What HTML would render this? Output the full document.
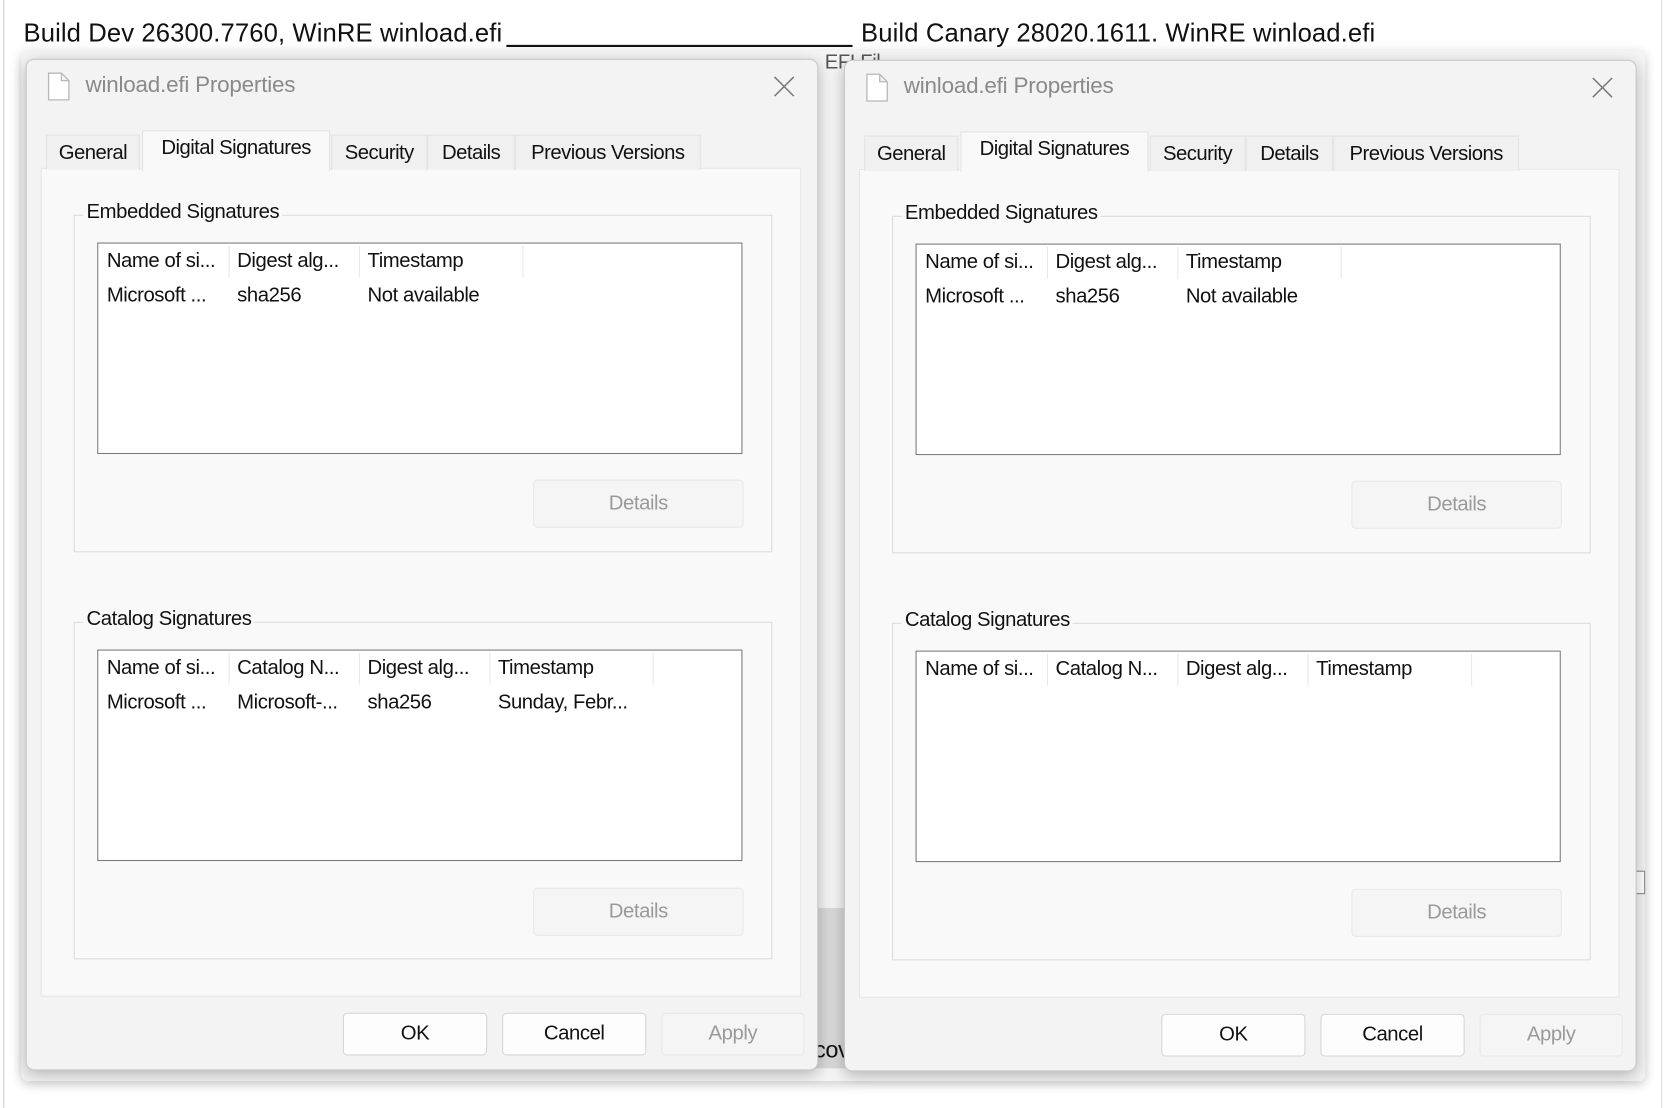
<!DOCTYPE html>
<html><head><meta charset="utf-8"><style>
html,body{margin:0;padding:0;width:1675px;height:1108px;overflow:hidden;background:#fff}
#w{position:absolute;left:0;top:0;width:1568px;height:1037px;transform:scale(1.0683);transform-origin:0 0;font-family:"Liberation Sans",sans-serif;color:#111}
.a{position:absolute}
.t{font-size:19px;letter-spacing:-0.4px;white-space:nowrap}
.dlg{position:absolute;width:740px;height:945px;background:#f3f3f3;border:1px solid #c8c8c8;border-radius:8px;box-shadow:0 4px 14px rgba(0,0,0,.25)}
.tab{position:absolute;top:70px;height:32px;background:#f0f0f0;border:1px solid #e3e3e3;border-bottom:none;font-size:19px;letter-spacing:-0.5px;line-height:34px;text-align:center}
.panel{position:absolute;left:13px;top:101px;width:710px;height:774px;background:#f9f9f9;border:1px solid #e6e6e6}
.grp{position:absolute;left:31px;width:652px;height:314px;border:1px solid #dcdcdc}
.gl{position:absolute;left:8px;top:-14px;background:#f9f9f9;padding:0 3px;font-size:19px;letter-spacing:-0.4px}
.lst{position:absolute;left:21px;top:25px;width:602px;height:196px;background:#fff;border:1px solid #7a7a7a}
.sep{position:absolute;top:2px;width:1px;height:30px;background:#e8e8e8}
.btn{position:absolute;background:#fdfdfd;border:1px solid #d6d6d6;border-radius:4px;text-align:center;font-size:19px;letter-spacing:-0.4px}
.dis{background:#f5f5f5;border-color:#e8e8e8;color:#9a9a9a}
.h{position:absolute;top:18px;font-size:24px;white-space:nowrap;letter-spacing:0.1px}
</style></head><body><div id="w">
<div class="a" style="left:3px;top:0;width:1px;height:1037px;background:#ccc"></div>
<div class="a" style="left:1555px;top:0;width:1px;height:1037px;background:#ddd"></div>
<div class="a" style="left:20px;top:47px;width:1520px;height:965px;background:#f4f4f4;box-shadow:0 3px 10px rgba(0,0,0,.2);border-radius:6px"></div>
<div class="a" style="left:763px;top:850px;width:30px;height:150px;background:#d8d8d8"></div>
<div class="a t" style="left:762px;top:970px;font-size:22px">cov</div>
<div class="a t" style="left:772px;top:48px;font-size:19px;color:#555">EFI Fil</div>
<div class="a" style="left:1530px;top:815px;width:8px;height:20px;border:1px solid #888;background:#fff"></div>
<div class="h" style="left:22px">Build Dev 26300.7760, WinRE winload.efi</div>
<div class="a" style="left:474px;top:42px;width:324px;height:1.5px;background:#111"></div>
<div class="h" style="left:806px">Build Canary 28020.1611. WinRE winload.efi</div>

<!-- left dialog -->
<div class="dlg" style="left:24px;top:55px">
 <svg class="a" style="left:18px;top:11px" width="24" height="28" viewBox="0 0 24 28"><path d="M2.5 1.5h12l7 7v18h-19z M14.5 1.5v7h7" fill="#fff" stroke="#b8b8b8" stroke-width="1.2"/></svg>
 <div class="a" style="left:55px;top:12px;font-size:21px;color:#8a8a8a;letter-spacing:-0.2px">winload.efi Properties</div>
 <svg class="a" style="left:699px;top:15px" width="20" height="20"><path d="M1 1L19 19M19 1L1 19" stroke="#777" stroke-width="1.4"/></svg>
 <div class="panel"></div>
 <div class="tab" style="left:18px;width:86px">General</div>
 <div class="tab" style="left:108px;width:174px;top:66px;height:37px;background:#f9f9f9;line-height:32px">Digital Signatures</div>
 <div class="tab" style="left:285px;width:88px">Security</div>
 <div class="tab" style="left:375px;width:80px">Details</div>
 <div class="tab" style="left:457px;width:172px">Previous Versions</div>
 <div class="grp" style="left:44px;top:145px">
  <div class="gl">Embedded Signatures</div>
  <div class="lst">
   <div class="sep" style="left:122px"></div><div class="sep" style="left:244px"></div><div class="sep" style="left:397px"></div>
   <div class="a t" style="left:8px;top:6px">Name of si...</div><div class="a t" style="left:130px;top:6px">Digest alg...</div><div class="a t" style="left:252px;top:6px">Timestamp</div>
   <div class="a t" style="left:8px;top:38px">Microsoft ...</div><div class="a t" style="left:130px;top:38px">sha256</div><div class="a t" style="left:252px;top:38px">Not available</div>
  </div>
  <div class="btn dis" style="left:429px;top:247px;width:195px;height:43px;line-height:43px">Details</div>
 </div>
 <div class="grp" style="left:44px;top:526px">
  <div class="gl">Catalog Signatures</div>
  <div class="lst">
   <div class="sep" style="left:122px"></div><div class="sep" style="left:244px"></div><div class="sep" style="left:366px"></div><div class="sep" style="left:519px"></div>
   <div class="a t" style="left:8px;top:6px">Name of si...</div><div class="a t" style="left:130px;top:6px">Catalog N...</div><div class="a t" style="left:252px;top:6px">Digest alg...</div><div class="a t" style="left:374px;top:6px">Timestamp</div>
   <div class="a t" style="left:8px;top:38px">Microsoft ...</div><div class="a t" style="left:130px;top:38px">Microsoft-...</div><div class="a t" style="left:252px;top:38px">sha256</div><div class="a t" style="left:374px;top:38px">Sunday, Febr...</div>
  </div>
  <div class="btn dis" style="left:429px;top:248px;width:195px;height:43px;line-height:43px">Details</div>
 </div>
 <div class="btn" style="left:296px;top:892px;width:133px;height:38px;line-height:38px">OK</div>
 <div class="btn" style="left:445px;top:892px;width:133px;height:38px;line-height:38px">Cancel</div>
 <div class="btn dis" style="left:594px;top:892px;width:132px;height:38px;line-height:38px">Apply</div>
</div>

<!-- right dialog -->
<div class="dlg" style="left:790px;top:56px">
 <svg class="a" style="left:18px;top:11px" width="24" height="28" viewBox="0 0 24 28"><path d="M2.5 1.5h12l7 7v18h-19z M14.5 1.5v7h7" fill="#fff" stroke="#b8b8b8" stroke-width="1.2"/></svg>
 <div class="a" style="left:55px;top:12px;font-size:21px;color:#8a8a8a;letter-spacing:-0.2px">winload.efi Properties</div>
 <svg class="a" style="left:699px;top:15px" width="20" height="20"><path d="M1 1L19 19M19 1L1 19" stroke="#777" stroke-width="1.4"/></svg>
 <div class="panel"></div>
 <div class="tab" style="left:18px;width:86px">General</div>
 <div class="tab" style="left:108px;width:174px;top:66px;height:37px;background:#f9f9f9;line-height:32px">Digital Signatures</div>
 <div class="tab" style="left:285px;width:88px">Security</div>
 <div class="tab" style="left:375px;width:80px">Details</div>
 <div class="tab" style="left:457px;width:172px">Previous Versions</div>
 <div class="grp" style="left:44px;top:145px">
  <div class="gl">Embedded Signatures</div>
  <div class="lst">
   <div class="sep" style="left:122px"></div><div class="sep" style="left:244px"></div><div class="sep" style="left:397px"></div>
   <div class="a t" style="left:8px;top:6px">Name of si...</div><div class="a t" style="left:130px;top:6px">Digest alg...</div><div class="a t" style="left:252px;top:6px">Timestamp</div>
   <div class="a t" style="left:8px;top:38px">Microsoft ...</div><div class="a t" style="left:130px;top:38px">sha256</div><div class="a t" style="left:252px;top:38px">Not available</div>
  </div>
  <div class="btn dis" style="left:429px;top:247px;width:195px;height:43px;line-height:43px">Details</div>
 </div>
 <div class="grp" style="left:44px;top:526px">
  <div class="gl">Catalog Signatures</div>
  <div class="lst">
   <div class="sep" style="left:122px"></div><div class="sep" style="left:244px"></div><div class="sep" style="left:366px"></div><div class="sep" style="left:519px"></div>
   <div class="a t" style="left:8px;top:6px">Name of si...</div><div class="a t" style="left:130px;top:6px">Catalog N...</div><div class="a t" style="left:252px;top:6px">Digest alg...</div><div class="a t" style="left:374px;top:6px">Timestamp</div>
  </div>
  <div class="btn dis" style="left:429px;top:248px;width:195px;height:43px;line-height:43px">Details</div>
 </div>
 <div class="btn" style="left:296px;top:892px;width:133px;height:38px;line-height:38px">OK</div>
 <div class="btn" style="left:445px;top:892px;width:133px;height:38px;line-height:38px">Cancel</div>
 <div class="btn dis" style="left:594px;top:892px;width:132px;height:38px;line-height:38px">Apply</div>
</div>
</div></body></html>
